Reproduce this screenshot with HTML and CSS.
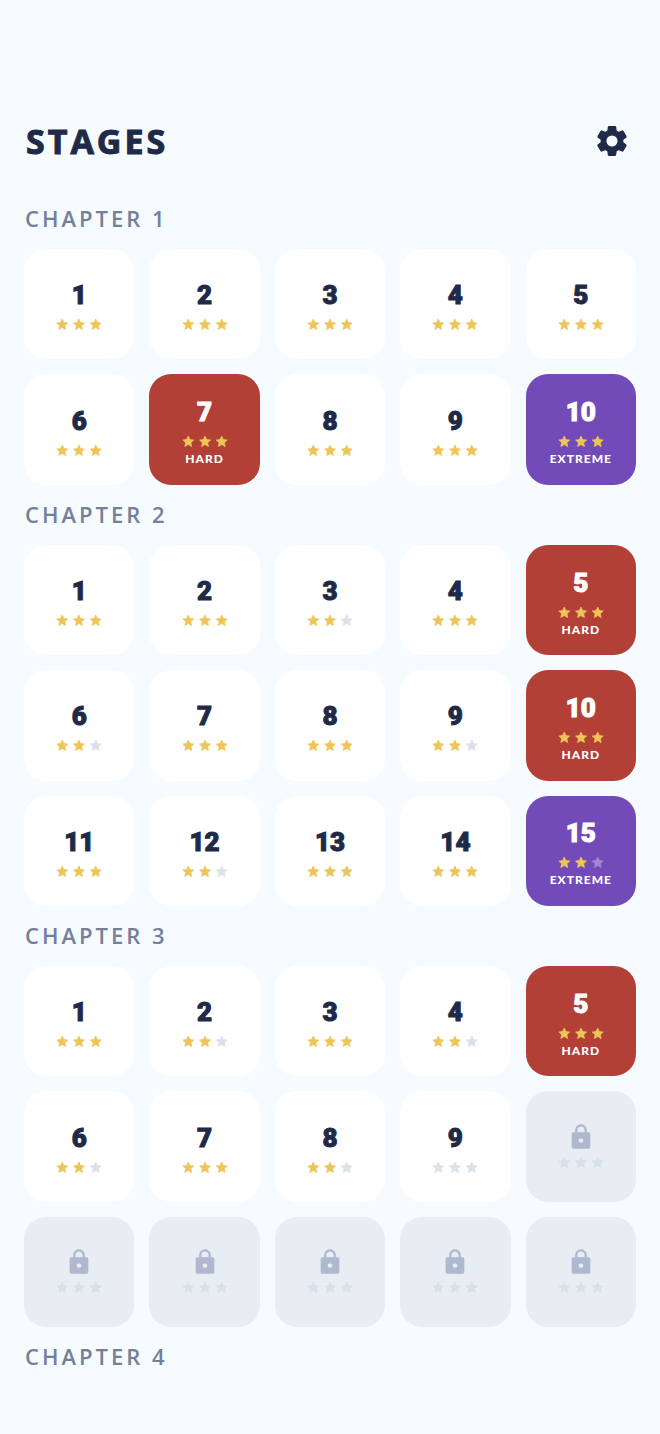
FILE: index.html
```
<!DOCTYPE html>
<html lang="en">
<head>
<meta charset="utf-8">
<meta name="viewport" content="width=device-width, initial-scale=1">
<title>Stages</title>
<link rel="stylesheet" href="styles.css">
</head>
<body>
<svg class="sprite" aria-hidden="true">
  <symbol id="star" viewBox="0 0 24 24"><path d="M12 1.500l3.100 6.900 7.400.8-5.500 5 1.600 7.400-6.600-3.800-6.600 3.800L7 14.200l-5.500-5 7.400-.8z" stroke-width="1.500" stroke-linejoin="round"/></symbol>
  <symbol id="stars" viewBox="0 0 88 24">
    <use href="#star" class="first" x="0" width="24" height="24"/>
    <use href="#star" class="second" x="32" width="24" height="24"/>
    <use href="#star" class="third" x="64" width="24" height="24"/>
  </symbol>
  <symbol id="lock" viewBox="0 0 24 24"><path d="M18 8h-1V6c0-2.760-2.240-5-5-5S7 3.240 7 6v2H5.500C4.700 8 4 8.700 4 9.500v11c0 .8.7 1.500 1.500 1.500h13c.8 0 1.500-.7 1.500-1.500v-11c0-.8-.7-1.500-1.500-1.500zm-6 9c-1.100 0-2-.9-2-2s.9-2 2-2 2 .9 2 2-.9 2-2 2zm3.100-9H8.900V6c0-1.710 1.390-3.100 3.100-3.100s3.100 1.390 3.100 3.100z"/></symbol>
</svg>
<header class="topbar">
  <h1 class="title">STAGES</h1>
  <button class="settings" type="button" aria-label="Settings">
    <svg viewBox="0 0 24 24"><path d="M19.140 12.940c.04-.3.06-.61.06-.94 0-.32-.02-.64-.07-.94l2.030-1.580c.18-.14.23-.41.12-.61l-1.920-3.320c-.12-.22-.37-.29-.59-.22l-2.390.96c-.5-.38-1.030-.7-1.620-.94l-.36-2.540c-.04-.24-.24-.41-.48-.41h-3.840c-.24 0-.43.17-.47.41l-.36 2.540c-.59.24-1.130.57-1.620.94l-2.390-.96c-.22-.08-.47 0-.59.22L2.740 8.870c-.12.21-.08.47.12.61l2.030 1.580c-.05.3-.09.63-.09.94s.02.64.07.94l-2.030 1.580c-.18.14-.23.41-.12.61l1.920 3.320c.12.22.37.29.59.22l2.390-.96c.5.38 1.030.7 1.620.94l.36 2.540c.05.24.24.41.48.41h3.840c.24 0 .44-.17.47-.41l.36-2.540c.59-.24 1.130-.56 1.620-.94l2.390.96c.22.08.47 0 .59-.22l1.920-3.320c.12-.22.07-.47-.12-.61l-2.010-1.580zM12 16.100c-2.260 0-4.100-1.840-4.100-4.100s1.840-4.100 4.100-4.100 4.100 1.840 4.100 4.100-1.840 4.100-4.100 4.100z"/></svg>
  </button>
</header>
<main>
  <section>
    <h2 class="chapter">CHAPTER 1</h2>
    <div class="grid">
      <button class="stage">1<svg class="stars"><use href="#stars"/></svg></button>
      <button class="stage">2<svg class="stars"><use href="#stars"/></svg></button>
      <button class="stage">3<svg class="stars"><use href="#stars"/></svg></button>
      <button class="stage">4<svg class="stars"><use href="#stars"/></svg></button>
      <button class="stage">5<svg class="stars"><use href="#stars"/></svg></button>
      <button class="stage">6<svg class="stars"><use href="#stars"/></svg></button>
      <button class="stage hard">7<svg class="stars"><use href="#stars"/></svg><span class="level">HARD</span></button>
      <button class="stage">8<svg class="stars"><use href="#stars"/></svg></button>
      <button class="stage">9<svg class="stars"><use href="#stars"/></svg></button>
      <button class="stage extreme">10<svg class="stars"><use href="#stars"/></svg><span class="level">EXTREME</span></button>
    </div>
  </section>
  <section>
    <h2 class="chapter">CHAPTER 2</h2>
    <div class="grid">
      <button class="stage">1<svg class="stars"><use href="#stars"/></svg></button>
      <button class="stage">2<svg class="stars"><use href="#stars"/></svg></button>
      <button class="stage">3<svg class="stars two"><use href="#stars"/></svg></button>
      <button class="stage">4<svg class="stars"><use href="#stars"/></svg></button>
      <button class="stage hard">5<svg class="stars"><use href="#stars"/></svg><span class="level">HARD</span></button>
      <button class="stage">6<svg class="stars two"><use href="#stars"/></svg></button>
      <button class="stage">7<svg class="stars"><use href="#stars"/></svg></button>
      <button class="stage">8<svg class="stars"><use href="#stars"/></svg></button>
      <button class="stage">9<svg class="stars two"><use href="#stars"/></svg></button>
      <button class="stage hard">10<svg class="stars"><use href="#stars"/></svg><span class="level">HARD</span></button>
      <button class="stage">11<svg class="stars"><use href="#stars"/></svg></button>
      <button class="stage">12<svg class="stars two"><use href="#stars"/></svg></button>
      <button class="stage">13<svg class="stars"><use href="#stars"/></svg></button>
      <button class="stage">14<svg class="stars"><use href="#stars"/></svg></button>
      <button class="stage extreme">15<svg class="stars two"><use href="#stars"/></svg><span class="level">EXTREME</span></button>
    </div>
  </section>
  <section>
    <h2 class="chapter">CHAPTER 3</h2>
    <div class="grid">
      <button class="stage">1<svg class="stars"><use href="#stars"/></svg></button>
      <button class="stage">2<svg class="stars two"><use href="#stars"/></svg></button>
      <button class="stage">3<svg class="stars"><use href="#stars"/></svg></button>
      <button class="stage">4<svg class="stars two"><use href="#stars"/></svg></button>
      <button class="stage hard">5<svg class="stars"><use href="#stars"/></svg><span class="level">HARD</span></button>
      <button class="stage">6<svg class="stars two"><use href="#stars"/></svg></button>
      <button class="stage">7<svg class="stars"><use href="#stars"/></svg></button>
      <button class="stage">8<svg class="stars two"><use href="#stars"/></svg></button>
      <button class="stage">9<svg class="stars none"><use href="#stars"/></svg></button>
      <button class="stage locked" disabled aria-label="Locked"><svg class="lock"><use href="#lock"/></svg><svg class="stars none"><use href="#stars"/></svg></button>
      <button class="stage locked" disabled aria-label="Locked"><svg class="lock"><use href="#lock"/></svg><svg class="stars none"><use href="#stars"/></svg></button>
      <button class="stage locked" disabled aria-label="Locked"><svg class="lock"><use href="#lock"/></svg><svg class="stars none"><use href="#stars"/></svg></button>
      <button class="stage locked" disabled aria-label="Locked"><svg class="lock"><use href="#lock"/></svg><svg class="stars none"><use href="#stars"/></svg></button>
      <button class="stage locked" disabled aria-label="Locked"><svg class="lock"><use href="#lock"/></svg><svg class="stars none"><use href="#stars"/></svg></button>
      <button class="stage locked" disabled aria-label="Locked"><svg class="lock"><use href="#lock"/></svg><svg class="stars none"><use href="#stars"/></svg></button>
    </div>
  </section>
  <section>
    <h2 class="chapter">CHAPTER 4</h2>
  </section>
</main>
</body>
</html>
```
FILE: styles.css
```
:root {
  --gold: #eec558;
  --empty: #dae2ea;
  --navy: #1f2a48;
}
* { box-sizing: border-box; }
body {
  margin: 0;
  padding: 116px 24px 46px;
  background: #f5fbff;
  color: var(--navy);
  font-family: "Open Sans", "Noto Sans", sans-serif;
}
.sprite { display: none; }
.topbar {
  display: flex;
  align-items: center;
  justify-content: space-between;
  height: 50px;
  margin-bottom: 23px;
  padding: 0 6px 0 2px;
}
.title {
  margin: 0;
  font-size: 34px;
  line-height: 52px;
  font-weight: 700;
  letter-spacing: 3px;
  -webkit-text-stroke: 1px currentColor;
  stroke-linejoin: round;
}
.settings {
  width: 36px;
  height: 36px;
  padding: 0;
  border: 0;
  background: none;
}
.settings svg {
  display: block;
  width: 36px;
  height: 36px;
  fill: var(--navy);
  stroke: var(--navy);
  stroke-width: 0.8;
}
.chapter {
  margin: 0;
  padding: 0 0 2px 1px;
  color: #757f9b;
  font-size: 22px;
  line-height: 58px;
  font-weight: 600;
  letter-spacing: 3px;
}
.grid {
  display: grid;
  grid-template-columns: repeat(5, 1fr);
  gap: 15px;
}
.stage {
  display: flex;
  flex-direction: column;
  align-items: center;
  justify-content: center;
  gap: 5px;
  aspect-ratio: 1;
  min-width: 0;
  padding: 0;
  border: 0;
  border-radius: 22px;
  background: #fff;
  color: var(--navy);
  font: 900 26px/36px Roboto, sans-serif;
  -webkit-text-stroke: 1px currentColor;
  stroke-linejoin: round;
}
.hard, .extreme { color: #fff; }
.hard { background: #b34037; }
.extreme { background: #724bb9; --empty: #a187d3; }
.locked {
  padding-bottom: 2px;
  background: #e7edf3;
  --empty: #d8e0e8;
}
.level {
  font-family: Lato, sans-serif;
  font-size: 12px;
  line-height: 12px;
  letter-spacing: 1px;
  -webkit-text-stroke: 0;
}
.lock {
  width: 28px;
  height: 28px;
  fill: #aeb8cf;
}
.stars {
  width: 46px;
  height: 13px;
  flex: none;
  --one: var(--gold);
  --two: var(--gold);
  --three: var(--gold);
}
.two { --three: var(--empty); }
.none { --one: var(--empty); --two: var(--empty); --three: var(--empty); }
.first { fill: var(--one); stroke: var(--one); }
.second { fill: var(--two); stroke: var(--two); }
.third { fill: var(--three); stroke: var(--three); }
```
